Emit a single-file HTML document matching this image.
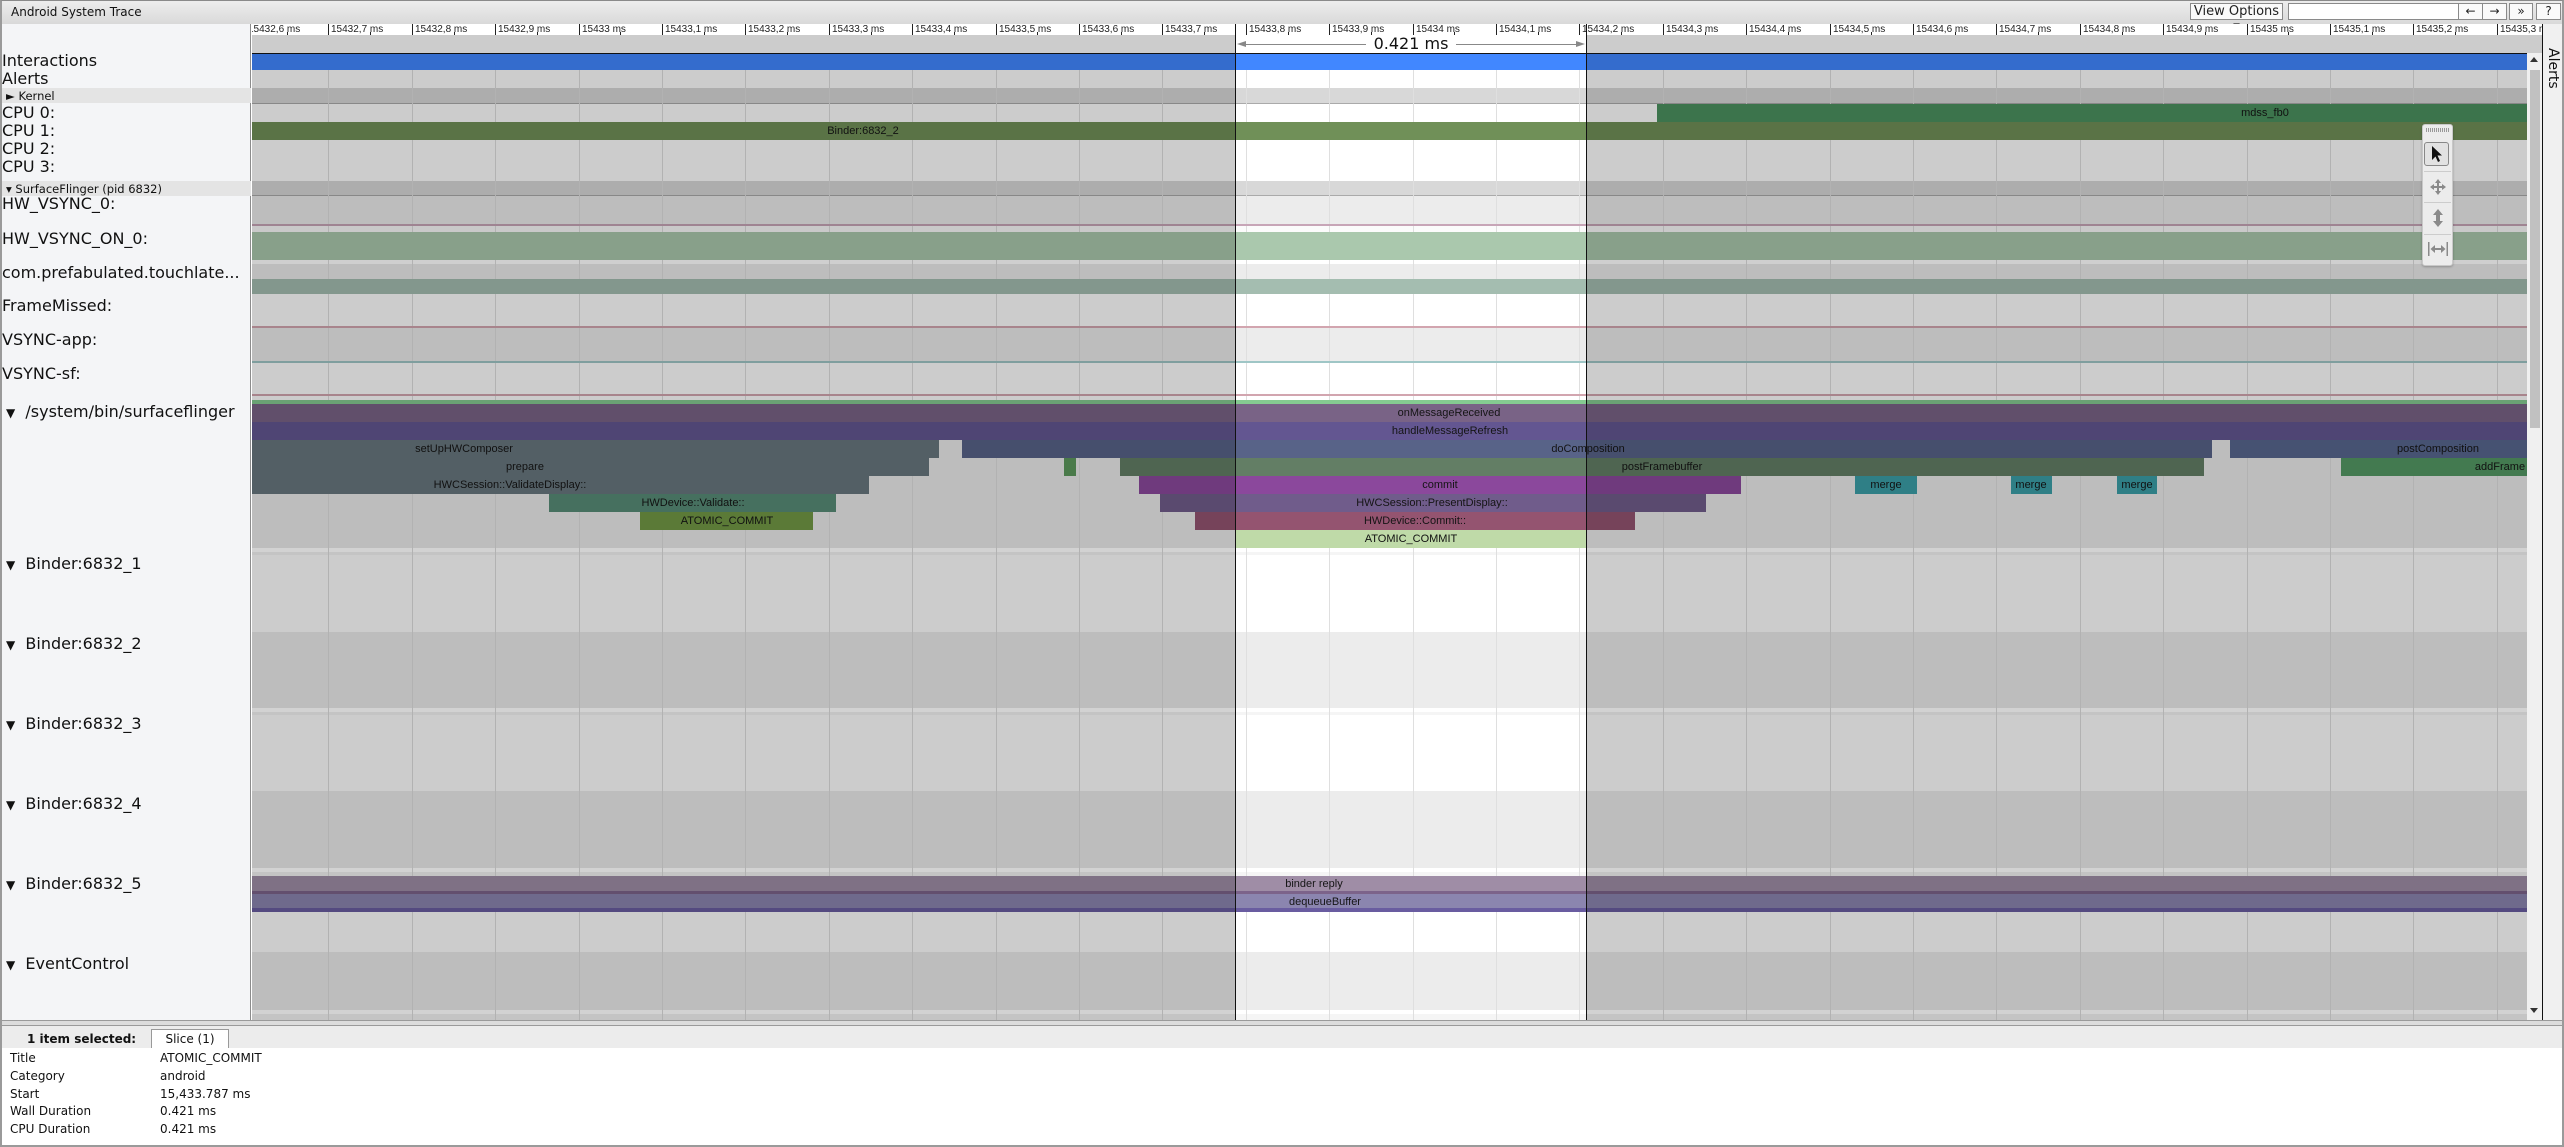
<!DOCTYPE html>
<html><head><meta charset="utf-8"><style>
*{margin:0;padding:0;box-sizing:border-box}
body{width:2564px;height:1147px;overflow:hidden;background:#fff;position:relative;font-family:"DejaVu Sans","Liberation Sans",sans-serif;color:#111}
.a{position:absolute}
.lb{position:absolute;font-size:16px;line-height:18px;white-space:nowrap;color:#111}
.st{position:absolute;font-family:"Liberation Sans",sans-serif;font-size:11px;line-height:18px;height:18px;width:300px;text-align:center;color:#111;white-space:nowrap}
.rl{position:absolute;top:24px;height:11px;border-left:1px solid #222;font-family:"Liberation Sans",sans-serif;font-size:10px;line-height:11px;padding-left:2px;color:#222;white-space:nowrap}
.mn{position:absolute;top:32px;height:3px;width:1px;background:#222}
.g{position:absolute;top:70px;height:950px;width:1px;background:#b2b2b2}
.btn{position:absolute;top:3px;height:17px;border:1px solid #8a8a8a;background:#fafafa;font-size:12px;line-height:15px;text-align:center;color:#222}
</style></head><body>

<!-- window frame -->
<div class="a" style="left:0;top:0;width:2564px;height:1147px;border:2px solid #9a9a9a;border-top:1px solid #8a8a8a"></div>
<!-- title bar -->
<div class="a" style="left:2px;top:1px;width:2560px;height:23px;background:linear-gradient(#ededed,#d9d9d9)"></div>
<div class="a" style="left:11px;top:4px;font-size:12px;line-height:16px;color:#111">Android System Trace</div>
<div class="btn" style="left:2190px;width:93px;font-size:13px">View Options ▾</div>
<div class="btn" style="left:2288px;width:171px;background:#fff"></div>
<div class="btn" style="left:2458px;width:25px">←</div>
<div class="btn" style="left:2482px;width:25px">→</div>
<div class="btn" style="left:2509px;width:24px">»</div>
<div class="btn" style="left:2536px;width:25px">?</div>

<!-- left panel -->
<div class="a" style="left:2px;top:24px;width:249px;height:996px;background:#f4f5f7;border-right:1px solid #8c8c8c"></div>
<div class="a" style="left:2px;top:88px;width:249px;height:15px;background:#e4e4e4"></div>
<div class="a" style="left:2px;top:181px;width:249px;height:15px;background:#e4e4e4"></div>
<div class="lb" style="left:2px;top:52px">Interactions</div>
<div class="lb" style="left:2px;top:70px">Alerts</div>
<div class="a" style="left:6px;top:89px;font-size:11.5px;line-height:14px">► Kernel</div>
<div class="lb" style="left:2px;top:104px">CPU 0:</div>
<div class="lb" style="left:2px;top:122px">CPU 1:</div>
<div class="lb" style="left:2px;top:140px">CPU 2:</div>
<div class="lb" style="left:2px;top:158px">CPU 3:</div>
<div class="a" style="left:6px;top:182px;font-size:11.5px;line-height:14px">▾ SurfaceFlinger (pid 6832)</div>
<div class="lb" style="left:2px;top:195px">HW_VSYNC_0:</div>
<div class="lb" style="left:2px;top:230px">HW_VSYNC_ON_0:</div>
<div class="lb" style="left:2px;top:264px">com.prefabulated.touchlate...</div>
<div class="lb" style="left:2px;top:297px">FrameMissed:</div>
<div class="lb" style="left:2px;top:331px">VSYNC-app:</div>
<div class="lb" style="left:2px;top:365px">VSYNC-sf:</div>
<div class="lb" style="left:6px;top:403px"><span style="font-size:12px">▼</span>&nbsp; /system/bin/surfaceflinger</div>
<div class="lb" style="left:6px;top:555px"><span style="font-size:12px">▼</span>&nbsp; Binder:6832_1</div>
<div class="lb" style="left:6px;top:635px"><span style="font-size:12px">▼</span>&nbsp; Binder:6832_2</div>
<div class="lb" style="left:6px;top:715px"><span style="font-size:12px">▼</span>&nbsp; Binder:6832_3</div>
<div class="lb" style="left:6px;top:795px"><span style="font-size:12px">▼</span>&nbsp; Binder:6832_4</div>
<div class="lb" style="left:6px;top:875px"><span style="font-size:12px">▼</span>&nbsp; Binder:6832_5</div>
<div class="lb" style="left:6px;top:955px"><span style="font-size:12px">▼</span>&nbsp; EventControl</div>

<!-- ruler -->
<div class="a" style="left:252px;top:24px;width:2291px;height:11px;background:#fff;overflow:hidden">
<div style="position:absolute;left:-252px;top:-24px;width:2600px;height:40px">
<div class="rl" style="left:245px">15432,6 ms</div><div class="mn" style="left:287px"></div>
<div class="rl" style="left:328px">15432,7 ms</div><div class="mn" style="left:370px"></div>
<div class="rl" style="left:412px">15432,8 ms</div><div class="mn" style="left:454px"></div>
<div class="rl" style="left:495px">15432,9 ms</div><div class="mn" style="left:537px"></div>
<div class="rl" style="left:579px">15433 ms</div><div class="mn" style="left:620px"></div>
<div class="rl" style="left:662px">15433,1 ms</div><div class="mn" style="left:704px"></div>
<div class="rl" style="left:745px">15433,2 ms</div><div class="mn" style="left:787px"></div>
<div class="rl" style="left:829px">15433,3 ms</div><div class="mn" style="left:871px"></div>
<div class="rl" style="left:912px">15433,4 ms</div><div class="mn" style="left:954px"></div>
<div class="rl" style="left:996px">15433,5 ms</div><div class="mn" style="left:1037px"></div>
<div class="rl" style="left:1079px">15433,6 ms</div><div class="mn" style="left:1121px"></div>
<div class="rl" style="left:1162px">15433,7 ms</div><div class="mn" style="left:1204px"></div>
<div class="rl" style="left:1246px">15433,8 ms</div><div class="mn" style="left:1288px"></div>
<div class="rl" style="left:1329px">15433,9 ms</div><div class="mn" style="left:1371px"></div>
<div class="rl" style="left:1413px">15434 ms</div><div class="mn" style="left:1454px"></div>
<div class="rl" style="left:1496px">15434,1 ms</div><div class="mn" style="left:1538px"></div>
<div class="rl" style="left:1579px">15434,2 ms</div><div class="mn" style="left:1621px"></div>
<div class="rl" style="left:1663px">15434,3 ms</div><div class="mn" style="left:1705px"></div>
<div class="rl" style="left:1746px">15434,4 ms</div><div class="mn" style="left:1788px"></div>
<div class="rl" style="left:1830px">15434,5 ms</div><div class="mn" style="left:1871px"></div>
<div class="rl" style="left:1913px">15434,6 ms</div><div class="mn" style="left:1955px"></div>
<div class="rl" style="left:1996px">15434,7 ms</div><div class="mn" style="left:2038px"></div>
<div class="rl" style="left:2080px">15434,8 ms</div><div class="mn" style="left:2122px"></div>
<div class="rl" style="left:2163px">15434,9 ms</div><div class="mn" style="left:2205px"></div>
<div class="rl" style="left:2247px">15435 ms</div><div class="mn" style="left:2288px"></div>
<div class="rl" style="left:2330px">15435,1 ms</div><div class="mn" style="left:2372px"></div>
<div class="rl" style="left:2413px">15435,2 ms</div><div class="mn" style="left:2455px"></div>
<div class="rl" style="left:2497px">15435,3 ms</div>
</div></div>

<!-- track area -->
<div class="a" style="left:252px;top:35px;width:2291px;height:18px;background:#cccccc"></div>
<div class="a" style="left:252px;top:53px;width:2275px;height:967px;background:#cccccc;overflow:hidden">
<div style="position:absolute;left:-252px;top:-53px;width:2600px;height:1100px">
<!-- row backgrounds -->
<div class="a" style="left:0;top:88px;width:2600px;height:15px;background:#adadad"></div>
<div class="a" style="left:0;top:103px;width:2600px;height:1px;background:#888"></div>
<div class="a" style="left:0;top:181px;width:2600px;height:15px;background:#adadad"></div>
<div class="a" style="left:0;top:195px;width:2600px;height:1px;background:#888"></div>
<div class="a" style="left:0;top:196px;width:2600px;height:28px;background:#bdbdbd"></div>
<div class="a" style="left:0;top:226px;width:2600px;height:6px;background:#c9c9c9"></div>
<div class="a" style="left:0;top:260px;width:2600px;height:4px;background:#cfcfcf"></div>
<div class="a" style="left:0;top:264px;width:2600px;height:15px;background:#bdbdbd"></div>
<div class="a" style="left:0;top:328px;width:2600px;height:33px;background:#bdbdbd"></div>
<div class="a" style="left:0;top:404px;width:2600px;height:144px;background:#bdbdbd"></div>
<div class="a" style="left:0;top:548px;width:2600px;height:4px;background:#d2d2d2"></div>
<div class="a" style="left:0;top:552px;width:2600px;height:3px;background:#c4c4c4"></div>
<div class="a" style="left:0;top:632px;width:2600px;height:76px;background:#bdbdbd"></div>
<div class="a" style="left:0;top:708px;width:2600px;height:4px;background:#d2d2d2"></div>
<div class="a" style="left:0;top:712px;width:2600px;height:3px;background:#c4c4c4"></div>
<div class="a" style="left:0;top:791px;width:2600px;height:77px;background:#bdbdbd"></div>
<div class="a" style="left:0;top:868px;width:2600px;height:4px;background:#d2d2d2"></div>
<div class="a" style="left:0;top:872px;width:2600px;height:4px;background:#c4c4c4"></div>
<div class="a" style="left:0;top:952px;width:2600px;height:58px;background:#bdbdbd"></div>
<div class="a" style="left:0;top:1010px;width:2600px;height:4px;background:#d2d2d2"></div>
<div class="a" style="left:0;top:1014px;width:2600px;height:6px;background:#c4c4c4"></div>
<!-- grid -->
<div class="g" style="left:328px"></div><div class="g" style="left:412px"></div><div class="g" style="left:495px"></div><div class="g" style="left:579px"></div><div class="g" style="left:662px"></div><div class="g" style="left:745px"></div><div class="g" style="left:829px"></div><div class="g" style="left:912px"></div><div class="g" style="left:996px"></div><div class="g" style="left:1079px"></div><div class="g" style="left:1162px"></div><div class="g" style="left:1246px"></div><div class="g" style="left:1329px"></div><div class="g" style="left:1413px"></div><div class="g" style="left:1496px"></div><div class="g" style="left:1579px"></div><div class="g" style="left:1663px"></div><div class="g" style="left:1746px"></div><div class="g" style="left:1830px"></div><div class="g" style="left:1913px"></div><div class="g" style="left:1996px"></div><div class="g" style="left:2080px"></div><div class="g" style="left:2163px"></div><div class="g" style="left:2247px"></div><div class="g" style="left:2330px"></div><div class="g" style="left:2413px"></div><div class="g" style="left:2497px"></div>
<!-- bands -->
<div class="a" style="left:0;top:53px;width:2600px;height:1px;background:#111"></div>
<div class="a" style="left:0;top:54px;width:2600px;height:16px;background:#346ccd"></div>
<div class="a" style="left:1657px;top:104px;width:1000px;height:18px;background:#3c744c"></div>
<div class="st" style="left:2115px;top:104px">mdss_fb0</div>
<div class="a" style="left:0;top:122px;width:2600px;height:18px;background:#5a7346"></div>
<div class="st" style="left:713px;top:122px">Binder:6832_2</div>
<div class="a" style="left:0;top:224px;width:2600px;height:2px;background:#9f8492"></div>
<div class="a" style="left:0;top:232px;width:2600px;height:28px;background:#88a08a"></div>
<div class="a" style="left:0;top:279px;width:2600px;height:15px;background:#83978d"></div>
<div class="a" style="left:0;top:326px;width:2600px;height:2px;background:#a8848c"></div>
<div class="a" style="left:0;top:361px;width:2600px;height:2px;background:#7f9e9e"></div>
<div class="a" style="left:0;top:394px;width:2600px;height:2px;background:#a8848c"></div>
<div class="a" style="left:0;top:400px;width:2600px;height:4px;background:#6aa274"></div>
<!-- surfaceflinger slices -->
<div class="a" style="left:0;top:404px;width:2600px;height:18px;background:#614f6b"></div>
<div class="a" style="left:0;top:422px;width:2600px;height:18px;background:#4f4574"></div>
<div class="a" style="left:0;top:440px;width:939px;height:18px;background:#535f65"></div>
<div class="a" style="left:962px;top:440px;width:1250px;height:18px;background:#464f6d"></div>
<div class="a" style="left:2230px;top:440px;width:400px;height:18px;background:#465272"></div>
<div class="a" style="left:0;top:458px;width:929px;height:18px;background:#535f65"></div>
<div class="a" style="left:1064px;top:458px;width:12px;height:18px;background:#4a7a4a"></div>
<div class="a" style="left:1120px;top:458px;width:1084px;height:18px;background:#4f6551"></div>
<div class="a" style="left:2341px;top:458px;width:300px;height:18px;background:#437a50"></div>
<div class="a" style="left:0;top:476px;width:869px;height:18px;background:#535f65"></div>
<div class="a" style="left:1139px;top:476px;width:602px;height:18px;background:#6f3a7d"></div>
<div class="a" style="left:1855px;top:476px;width:62px;height:18px;background:#2f7f86"></div>
<div class="a" style="left:2011px;top:476px;width:41px;height:18px;background:#2f7f86"></div>
<div class="a" style="left:2117px;top:476px;width:40px;height:18px;background:#2f7f86"></div>
<div class="a" style="left:549px;top:494px;width:287px;height:18px;background:#46705f"></div>
<div class="a" style="left:1160px;top:494px;width:546px;height:18px;background:#5a4a6f"></div>
<div class="a" style="left:640px;top:512px;width:173px;height:18px;background:#5b7a37"></div>
<div class="a" style="left:1195px;top:512px;width:440px;height:18px;background:#76435a"></div>
<div class="st" style="left:1299px;top:404px">onMessageReceived</div>
<div class="st" style="left:1300px;top:422px">handleMessageRefresh</div>
<div class="st" style="left:314px;top:440px">setUpHWComposer</div>
<div class="st" style="left:1438px;top:440px">doComposition</div>
<div class="st" style="left:2288px;top:440px">postComposition</div>
<div class="st" style="left:375px;top:458px">prepare</div>
<div class="st" style="left:1512px;top:458px">postFramebuffer</div>
<div class="st" style="left:2350px;top:458px">addFrame</div>
<div class="st" style="left:360px;top:476px">HWCSession::ValidateDisplay::</div>
<div class="st" style="left:1290px;top:476px">commit</div>
<div class="st" style="left:1736px;top:476px">merge</div>
<div class="st" style="left:1881px;top:476px">merge</div>
<div class="st" style="left:1987px;top:476px">merge</div>
<div class="st" style="left:543px;top:494px">HWDevice::Validate::</div>
<div class="st" style="left:1282px;top:494px">HWCSession::PresentDisplay::</div>
<div class="st" style="left:577px;top:512px">ATOMIC_COMMIT</div>
<div class="st" style="left:1265px;top:512px">HWDevice::Commit::</div>
<!-- binder 5 -->
<div class="a" style="left:0;top:876px;width:2600px;height:15px;background:#7f7185"></div>
<div class="a" style="left:0;top:891px;width:2600px;height:3px;background:#634f6e"></div>
<div class="a" style="left:0;top:894px;width:2600px;height:14px;background:#6f6a8c"></div>
<div class="a" style="left:0;top:908px;width:2600px;height:4px;background:#544a80"></div>
<div class="st" style="left:1164px;top:875px">binder reply</div>
<div class="st" style="left:1175px;top:893px">dequeueBuffer</div>
</div></div>

<!-- selection highlight -->
<div class="a" style="left:1236px;top:35px;width:350px;height:985px;backdrop-filter:brightness(1.25);-webkit-backdrop-filter:brightness(1.25)"></div>
<div class="a" style="left:1236px;top:530px;width:350px;height:18px;background:#bfdaa8"></div>
<div class="st" style="left:1261px;top:530px">ATOMIC_COMMIT</div>
<div class="a" style="left:1235px;top:24px;width:1px;height:996px;background:#111"></div>
<div class="a" style="left:1586px;top:24px;width:1px;height:996px;background:#111"></div>
<div class="a" style="left:1240px;top:44px;width:342px;height:1px;background:#888"></div>
<div class="a" style="left:1237px;top:41px;width:0;height:0;border-top:3px solid transparent;border-bottom:3px solid transparent;border-right:9px solid #888"></div>
<div class="a" style="left:1576px;top:41px;width:0;height:0;border-top:3px solid transparent;border-bottom:3px solid transparent;border-left:9px solid #888"></div>
<div class="a" style="left:1366px;top:35px;width:90px;height:18px;background:#fff;font-size:16px;line-height:18px;text-align:center;color:#111">0.421 ms</div>

<!-- scrollbar + alerts column -->
<div class="a" style="left:2527px;top:53px;width:15px;height:967px;background:#f0f0f0"></div>
<div class="a" style="left:2530px;top:70px;width:10px;height:358px;background:#c1c1c1"></div>
<div class="a" style="left:2530px;top:57px;width:0;height:0;border-left:4px solid transparent;border-right:4px solid transparent;border-bottom:5px solid #333"></div>
<div class="a" style="left:2530px;top:1008px;width:0;height:0;border-left:4px solid transparent;border-right:4px solid transparent;border-top:5px solid #333"></div>
<div class="a" style="left:2542px;top:24px;width:1px;height:996px;background:#111"></div>
<div class="a" style="left:2543px;top:24px;width:19px;height:996px;background:#f0f0f0"></div>
<div class="a" style="left:2545px;top:48px;writing-mode:vertical-rl;font-size:14px;line-height:16px;color:#111">Alerts</div>

<!-- tool palette -->
<div class="a" style="left:2422px;top:124px;width:31px;height:142px;background:#ececec;border:1px solid #c8c8c8;border-radius:3px;box-shadow:0 1px 2px rgba(0,0,0,.25)"></div>
<div class="a" style="left:2426px;top:128px;width:23px;height:4px;background:repeating-linear-gradient(90deg,#999 0 1px,transparent 1px 2px)"></div>
<div class="a" style="left:2424px;top:142px;width:25px;height:24px;border:1px solid #888;border-radius:3px;background:#e2e2e2"></div>
<svg class="a" style="left:2429px;top:145px" width="16" height="18" viewBox="0 0 16 18"><path d="M3 1 L3 15 L6.5 11.5 L9 17 L11 16 L8.5 10.5 L13 10.5 Z" fill="#111"/></svg>
<div class="a" style="left:2424px;top:171px;width:27px;height:1px;background:#ccc"></div>
<svg class="a" style="left:2429px;top:178px" width="18" height="18" viewBox="0 0 18 18" fill="#8a8a8a"><path d="M9 1 L12 5 L10 5 L10 8 L13 8 L13 6 L17 9 L13 12 L13 10 L10 10 L10 13 L12 13 L9 17 L6 13 L8 13 L8 10 L5 10 L5 12 L1 9 L5 6 L5 8 L8 8 L8 5 L6 5 Z"/></svg>
<div class="a" style="left:2424px;top:202px;width:27px;height:1px;background:#ccc"></div>
<svg class="a" style="left:2431px;top:208px" width="14" height="20" viewBox="0 0 14 20" fill="#8a8a8a"><path d="M7 1 L12 7 L9 7 L9 13 L12 13 L7 19 L2 13 L5 13 L5 7 L2 7 Z"/></svg>
<div class="a" style="left:2424px;top:234px;width:27px;height:1px;background:#ccc"></div>
<svg class="a" style="left:2427px;top:242px" width="22" height="14" viewBox="0 0 22 14" fill="#8a8a8a"><rect x="1" y="0" width="1.5" height="14"/><rect x="19.5" y="0" width="1.5" height="14"/><path d="M3.5 7 L8 3 L8 6 L14 6 L14 3 L18.5 7 L14 11 L14 8 L8 8 L8 11 Z"/></svg>

<!-- bottom panel -->
<div class="a" style="left:2px;top:1020px;width:2560px;height:5px;background:#dcdcdc;border-top:1px solid #9a9a9a"></div>
<div class="a" style="left:2px;top:1025px;width:2560px;height:23px;background:#ececec;border-top:1px solid #9a9a9a"></div>
<div class="a" style="left:27px;top:1032px;font-size:12px;line-height:15px;font-weight:bold;color:#111">1 item selected:</div>
<div class="a" style="left:151px;top:1029px;width:78px;height:20px;background:#fff;border:1px solid #999;border-bottom:none;font-size:12px;line-height:18px;text-align:center;color:#111">Slice (1)</div>
<div class="a" style="left:2px;top:1048px;width:2560px;height:97px;background:#fff"></div>
<div class="a" style="left:10px;top:1050px;font-size:12px;line-height:17.8px;color:#111">Title<br>Category<br>Start<br>Wall Duration<br>CPU Duration</div>
<div class="a" style="left:160px;top:1050px;font-size:12px;line-height:17.8px;color:#111">ATOMIC_COMMIT<br>android<br>15,433.787 ms<br>0.421 ms<br>0.421 ms</div>
<div class="a" style="left:0;top:1145px;width:2564px;height:2px;background:#9a9a9a"></div>
</body></html>
